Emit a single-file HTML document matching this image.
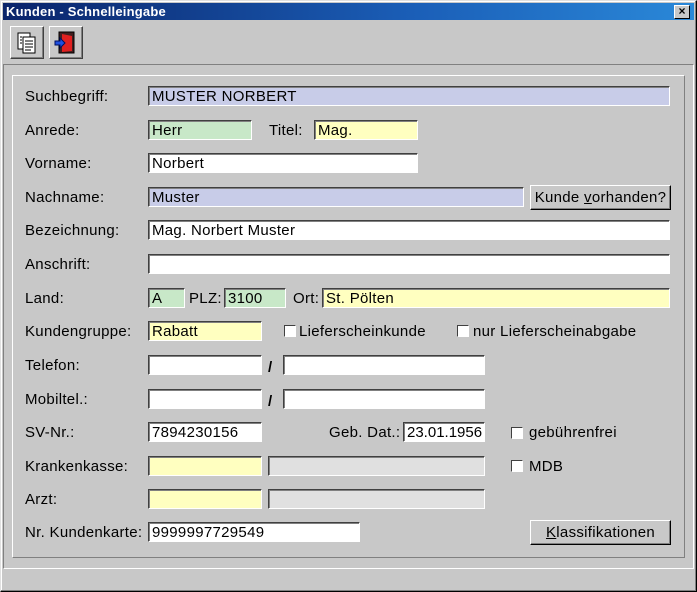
<!DOCTYPE html>
<html><head><meta charset="utf-8"><style>
*{box-sizing:border-box;margin:0;padding:0}
body{width:697px;height:592px;background:#c8c8c8;font-family:"Liberation Sans",Arial,sans-serif;font-size:15px;letter-spacing:0.3px;color:#000;position:relative;overflow:hidden}
.win{position:absolute;left:0;top:0;width:697px;height:592px;border:1px solid;border-color:#e0e0e0 #000 #000 #e0e0e0;box-shadow:inset -1px -1px 0 #808080,inset 1px 1px 0 #fff}
.title{position:absolute;left:3px;top:3px;width:691px;height:17px;background:linear-gradient(90deg,#0a246a,#1b5fb8 60%,#2a88d8);color:#fff;font-weight:bold;font-size:13px;letter-spacing:0.2px;line-height:17px;padding-left:3px}
.x{position:absolute;right:4px;top:2px;width:16px;height:14px;background:#c8c8c8;border:1px solid;border-color:#fff #000 #000 #fff;color:#000;font-size:12px;line-height:11px;text-align:center;font-weight:bold;letter-spacing:0}
.tb{position:absolute;top:26px;width:34px;height:33px;border:1px solid;border-color:#fff #404040 #404040 #fff;box-shadow:inset -1px -1px 0 #808080}
.abs{position:absolute}
.lbl{position:absolute;line-height:22px;white-space:nowrap}
.f{position:absolute;height:20px;border:1px solid;border-color:#404040 #fff #fff #404040;box-shadow:inset 1px 1px 0 #808080;background:#fff;padding-left:3px;line-height:20px;white-space:nowrap;overflow:hidden}
.lav{background:#c8cce8}.grn{background:#c8e8c8}.yel{background:#ffffc0}.dis{background:#e0e0e0}
.btn{position:absolute;height:25px;border:1px solid;border-color:#fff #000 #000 #fff;box-shadow:inset -1px -1px 0 #808080;text-align:center;line-height:24px}
.cb{position:absolute;width:12px;height:12px;background:#fff;border:1px solid;border-color:#404040 #fff #fff #404040}
</style></head><body>
<div class="win"></div>
<div class="title">Kunden - Schnelleingabe<div class="x">×</div></div>
<div class="tb" style="left:10px"><svg width="32" height="31" viewBox="0 0 32 31"><rect x="7" y="6" width="12" height="16" fill="#fff" stroke="#000"/><rect x="12" y="10" width="12" height="16" fill="#fff" stroke="#000"/><g stroke="#000"><line x1="9" y1="10" x2="11" y2="10"/><line x1="9" y1="13" x2="11" y2="13"/><line x1="9" y1="16" x2="11" y2="16"/><line x1="14" y1="14" x2="22" y2="14"/><line x1="14" y1="17" x2="22" y2="17"/><line x1="14" y1="20" x2="22" y2="20"/><line x1="14" y1="23" x2="20" y2="23"/></g></svg></div>
<div class="tb" style="left:49px"><svg width="32" height="31" viewBox="0 0 32 31"><rect x="9" y="5" width="15" height="21" fill="#402020" stroke="#000"/><path d="M12 7 L22 9 L22 24 L12 25 Z" fill="#e02020"/><path d="M5 14 h5 v-3 l5 5 l-5 5 v-3 h-5 z" fill="#2050e0" stroke="#001060"/></svg></div>
<div class="abs" style="left:3px;top:64px;width:691px;height:505px;border:1px solid;border-color:#808080 #fff #fff #808080"></div>
<div class="abs" style="left:12px;top:75px;width:673px;height:483px;border:1px solid;border-color:#fff #808080 #808080 #fff"></div>

<div class="lbl" style="left:25px;top:86px">Suchbegriff:</div>
<div class="f lav" style="left:148px;top:86px;width:522px">MUSTER NORBERT</div>

<div class="lbl" style="left:25px;top:120px">Anrede:</div>
<div class="f grn" style="left:148px;top:120px;width:104px">Herr</div>
<div class="lbl" style="left:269px;top:120px">Titel:</div>
<div class="f yel" style="left:314px;top:120px;width:104px">Mag.</div>

<div class="lbl" style="left:25px;top:153px">Vorname:</div>
<div class="f" style="left:148px;top:153px;width:270px">Norbert</div>

<div class="lbl" style="left:25px;top:187px">Nachname:</div>
<div class="f lav" style="left:148px;top:187px;width:376px">Muster</div>
<div class="btn" style="left:530px;top:185px;width:141px">Kunde <u>v</u>orhanden?</div>

<div class="lbl" style="left:25px;top:220px">Bezeichnung:</div>
<div class="f" style="left:148px;top:220px;width:522px">Mag. Norbert Muster</div>

<div class="lbl" style="left:25px;top:254px">Anschrift:</div>
<div class="f" style="left:148px;top:254px;width:522px"></div>

<div class="lbl" style="left:25px;top:288px">Land:</div>
<div class="f grn" style="left:148px;top:288px;width:37px">A</div>
<div class="lbl" style="left:189px;top:288px">PLZ:</div>
<div class="f grn" style="left:224px;top:288px;width:62px">3100</div>
<div class="lbl" style="left:293px;top:288px">Ort:</div>
<div class="f yel" style="left:322px;top:288px;width:348px">St. Pölten</div>

<div class="lbl" style="left:25px;top:321px">Kundengruppe:</div>
<div class="f yel" style="left:148px;top:321px;width:114px">Rabatt</div>
<div class="cb" style="left:284px;top:325px"></div><div class="lbl" style="left:299px;top:321px">Lieferscheinkunde</div>
<div class="cb" style="left:457px;top:325px"></div><div class="lbl" style="left:473px;top:321px">nur Lieferscheinabgabe</div>

<div class="lbl" style="left:25px;top:355px">Telefon:</div>
<div class="f" style="left:148px;top:355px;width:114px"></div>
<div class="lbl" style="left:268px;top:357px;font-weight:bold">/</div>
<div class="f" style="left:283px;top:355px;width:202px"></div>

<div class="lbl" style="left:25px;top:389px">Mobiltel.:</div>
<div class="f" style="left:148px;top:389px;width:114px"></div>
<div class="lbl" style="left:268px;top:391px;font-weight:bold">/</div>
<div class="f" style="left:283px;top:389px;width:202px"></div>

<div class="lbl" style="left:25px;top:422px">SV-Nr.:</div>
<div class="f" style="left:148px;top:422px;width:114px">7894230156</div>
<div class="lbl" style="left:329px;top:422px">Geb. Dat.:</div>
<div class="f" style="left:403px;top:422px;width:82px;letter-spacing:0">23.01.1956</div>
<div class="cb" style="left:511px;top:427px"></div><div class="lbl" style="left:529px;top:422px">gebührenfrei</div>

<div class="lbl" style="left:25px;top:456px">Krankenkasse:</div>
<div class="f yel" style="left:148px;top:456px;width:114px"></div>
<div class="f dis" style="left:268px;top:456px;width:217px"></div>
<div class="cb" style="left:511px;top:460px"></div><div class="lbl" style="left:529px;top:456px">MDB</div>

<div class="lbl" style="left:25px;top:489px">Arzt:</div>
<div class="f yel" style="left:148px;top:489px;width:114px"></div>
<div class="f dis" style="left:268px;top:489px;width:217px"></div>

<div class="lbl" style="left:25px;top:522px">Nr. Kundenkarte:</div>
<div class="f" style="left:148px;top:522px;width:212px">9999997729549</div>
<div class="btn" style="left:530px;top:520px;width:141px"><u>K</u>lassifikationen</div>
</body></html>
